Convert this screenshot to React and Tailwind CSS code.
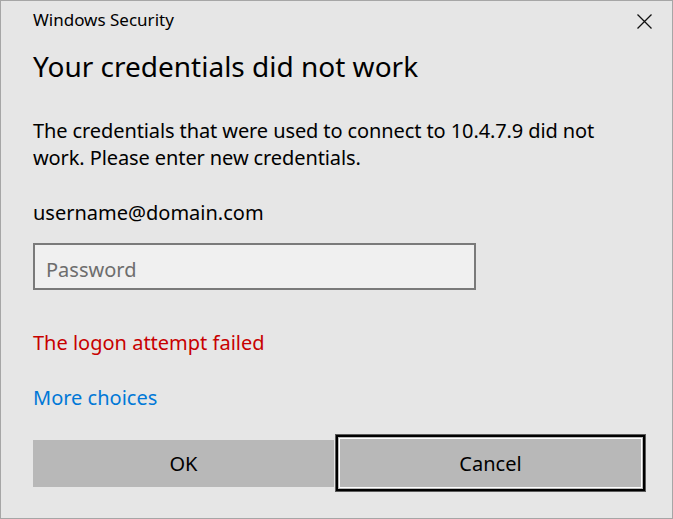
import React from "react";

export default function App() {
  return (
    <div className="w-[673px] h-[519px] border border-[#a6a6a6] bg-[#e6e6e6] text-black font-['Noto_Sans',sans-serif] flex flex-col pl-[32px]">
      <div className="flex items-start justify-between pt-[7px] pr-[20px]">
        <div className="text-[17px] leading-[24px]">Windows Security</div>
        <svg width="15" height="15" viewBox="0 0 15 15" className="mt-[6px]">
          <path d="M0.5 0.5 L14.5 14.5 M14.5 0.5 L0.5 14.5" stroke="#111" strokeWidth="1.3" fill="none" />
        </svg>
      </div>
      <h1 className="mt-[16px] text-[28px] leading-[36px] font-normal">Your credentials did not work</h1>
      <p className="mt-[33px] text-[20px] leading-[27px] whitespace-nowrap tracking-[-0.1px]">
        The credentials that were used to connect to 10.4.7.9 did not
        <br />
        work. Please enter new credentials.
      </p>
      <div className="mt-[28px] text-[20px] leading-[27px]">username@domain.com</div>
      <input
        type="password"
        placeholder="Password"
        className="mt-[17px] w-[443px] h-[47px] border-2 border-[#7a7a7a] bg-[#f0f0f0] pl-[11px] pt-[6px] text-[20px] leading-[27px] outline-none placeholder:text-[#6d6d6d] font-['Noto_Sans',sans-serif]"
      />
      <div className="mt-[39px] text-[20px] leading-[27px] text-[#c80000]">The logon attempt failed</div>
      <div className="mt-[28px] text-[20px] leading-[27px] text-[#0078d7]">More choices</div>
      <div className="mt-[23px] flex items-center gap-[1px]">
        <div className="w-[301px] h-[47px] bg-[#b8b8b8] flex items-center justify-center text-[20px] leading-[27px]">OK</div>
        <div className="w-[311px] h-[58px] border border-[#5a5a5a]">
          <div className="w-full h-full border-2 border-black p-px bg-[#b8b8b8]">
            <div className="w-full h-full border border-white flex items-center justify-center text-[20px] leading-[27px]">Cancel</div>
          </div>
        </div>
      </div>
    </div>
  );
}
